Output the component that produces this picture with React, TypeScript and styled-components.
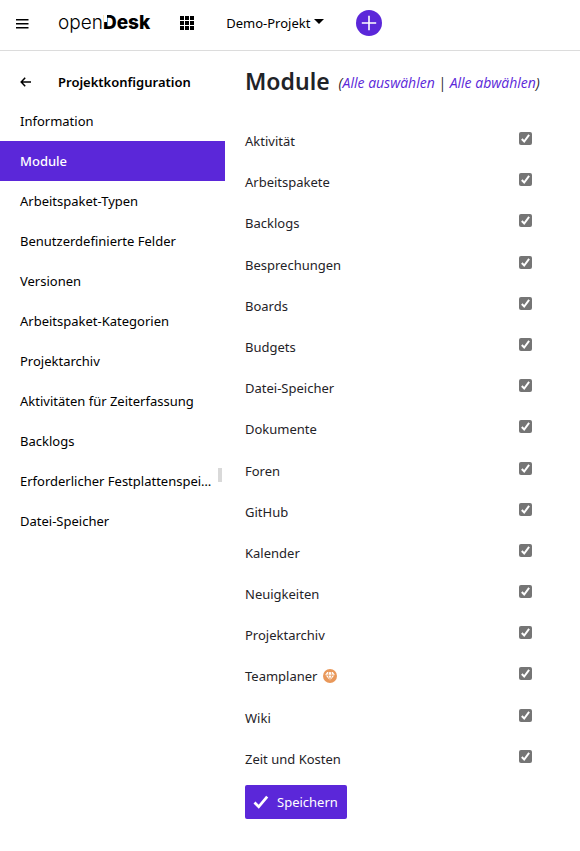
import React, { useState } from 'react';
import styled, { createGlobalStyle } from 'styled-components';

const accent = '#5b27d9';

const GlobalStyle = createGlobalStyle`
  *, *::before, *::after { box-sizing: border-box; }
  body {
    margin: 0;
    background: #fff;
    color: #1f2328;
    font-family: 'Noto Sans', sans-serif;
    font-size: 13px;
    line-height: 20px;
  }
  button { font: inherit; color: inherit; border: 0; padding: 0; background: none; cursor: pointer; }
  svg { display: block; flex: none; }
`;

const TopBar = styled.header`
  display: flex;
  align-items: center;
  height: 51px;
  padding: 0 16px 4px;
  border-bottom: 1px solid #dcdcdc;
  color: #000;
`;

const IconButton = styled.button`
  display: flex;
`;

const Logo = styled.a`
  position: relative;
  margin: 0 30px 0 29px;
  color: #000;
  font-family: Inter, sans-serif;
  font-size: 19px;
  font-weight: 300;
  line-height: 24px;
  text-decoration: none;

  b { font-weight: 800; }
`;

const LogoCut = styled.span`
  position: absolute;
  left: 46px;
  top: 4px;
  width: 3px;
  height: 7px;
  background: #fff;
`;

const ProjectButton = styled.button`
  display: flex;
  align-items: center;
  gap: 4px;
  margin-left: 32px;
`;

const Caret = styled.svg`
  margin-bottom: 4px;
`;

const AddButton = styled.button`
  display: grid;
  place-items: center;
  width: 26px;
  height: 26px;
  margin-left: 32px;
  border-radius: 50%;
  background: ${accent};
  color: #fff;
`;

const Body = styled.div`
  display: grid;
  grid-template-columns: 225px 1fr;
`;

const Sidebar = styled.aside`
  position: relative;
  padding-top: 12px;
  color: #000;
`;

const SidebarHead = styled.div`
  display: flex;
  align-items: center;
  gap: 26px;
  height: 38px;
  padding-left: 20px;
`;

const SidebarTitle = styled.h2`
  margin: 0;
  font-size: 13px;
  font-weight: 600;
`;

const MenuLink = styled.a<{ $active: boolean }>`
  display: block;
  padding: 0 12px 0 20px;
  overflow: hidden;
  color: ${(p) => (p.$active ? '#fff' : '#000')};
  background: ${(p) => (p.$active ? accent : 'transparent')};
  font-weight: ${(p) => (p.$active ? 500 : 400)};
  line-height: 40px;
  text-decoration: none;
  text-overflow: ellipsis;
  white-space: nowrap;
`;

const ResizeHandle = styled.span`
  position: absolute;
  right: 3px;
  top: 417px;
  width: 4px;
  height: 14px;
  background: #d9d9d9;
`;

const Main = styled.main`
  padding: 12px 20px 32px;
`;

const TitleRow = styled.div`
  display: flex;
  align-items: center;
  gap: 9px;
  white-space: nowrap;
`;

const Title = styled.h1`
  margin: 0;
  font-size: 23px;
  font-weight: 600;
  line-height: 36px;
`;

const Selection = styled.span`
  padding-top: 4px;
  font-family: 'Open Sans', sans-serif;
  font-size: 14px;
  font-style: italic;

  button { color: ${accent}; }
`;

const ModuleList = styled.div`
  display: grid;
  grid-auto-rows: 1fr;
  min-height: 659px;
  margin-top: 22px;
`;

const ModuleRow = styled.label`
  display: grid;
  grid-template-columns: 274px auto;
  justify-content: start;
  align-items: start;
  padding-top: 10px;
`;

const ModuleName = styled.span`
  display: flex;
  align-items: center;
  gap: 6px;
`;

const Check = styled.input`
  width: 13px;
  height: 13px;
  margin: 1px 0 0;
  appearance: none;
  border-radius: 2px;
  background: #757575;

  &:checked {
    background: #757575 url("data:image/svg+xml,%3Csvg xmlns='http://www.w3.org/2000/svg' viewBox='0 0 13 13'%3E%3Cpath d='M2.8 7l2.4 2.5 4.9-6.6' fill='none' stroke='white' stroke-width='2'/%3E%3C/svg%3E");
  }
`;

const SaveButton = styled.button`
  display: flex;
  align-items: center;
  gap: 8px;
  height: 34px;
  margin-top: 5px;
  padding: 0 9px 0 8px;
  border-radius: 2px;
  background: ${accent};
  color: #fff;
`;

const menu = [
  'Information', 'Module', 'Arbeitspaket-Typen', 'Benutzerdefinierte Felder', 'Versionen',
  'Arbeitspaket-Kategorien', 'Projektarchiv', 'Aktivitäten für Zeiterfassung', 'Backlogs',
  'Erforderlicher Festplattenspeicher', 'Datei-Speicher',
];

const modules = [
  'Aktivität', 'Arbeitspakete', 'Backlogs', 'Besprechungen', 'Boards', 'Budgets',
  'Datei-Speicher', 'Dokumente', 'Foren', 'GitHub', 'Kalender', 'Neuigkeiten',
  'Projektarchiv', 'Teamplaner', 'Wiki', 'Zeit und Kosten',
];

const dots = [0, 5, 10];

export default function App() {
  const [enabled, setEnabled] = useState<string[]>(modules);
  const toggle = (name: string) =>
    setEnabled((list) => (list.includes(name) ? list.filter((n) => n !== name) : [...list, name]));

  return (
    <>
      <GlobalStyle />
      <TopBar>
        <IconButton aria-label="Menü">
          <svg width="13" height="12" viewBox="0 0 13 12" fill="currentColor">
            <path d="M0 2h12.5v1.6H0zM0 6h12.5v1.6H0zM0 10h12.5v1.6H0z" />
          </svg>
        </IconButton>
        <Logo href="#">open<b>Desk</b><LogoCut /></Logo>
        <IconButton aria-label="Anwendungen">
          <svg width="14" height="14" viewBox="0 0 14 14" fill="currentColor">
            {dots.map((y) => dots.map((x) => <rect key={`${x}-${y}`} x={x} y={y} width="4" height="4" />))}
          </svg>
        </IconButton>
        <ProjectButton>
          Demo-Projekt
          <Caret width="10" height="5" viewBox="0 0 10 5" fill="currentColor"><path d="M0 0h10L5 5z" /></Caret>
        </ProjectButton>
        <AddButton aria-label="Neu">
          <svg width="16" height="16" viewBox="0 0 16 16" stroke="currentColor" strokeWidth="1.6">
            <path d="M8 .8v14.4M.8 8h14.4" />
          </svg>
        </AddButton>
      </TopBar>
      <Body>
        <Sidebar>
          <SidebarHead>
            <IconButton aria-label="Zurück">
              <svg width="12" height="10" viewBox="0 0 12 10" fill="none" stroke="currentColor" strokeWidth="1.5">
                <path d="M5.2.8L1.2 5l4 4.2M1.2 5H11" />
              </svg>
            </IconButton>
            <SidebarTitle>Projektkonfiguration</SidebarTitle>
          </SidebarHead>
          <nav>
            {menu.map((item) => (
              <MenuLink key={item} href="#" $active={item === 'Module'}>{item}</MenuLink>
            ))}
          </nav>
          <ResizeHandle />
        </Sidebar>
        <Main>
          <TitleRow>
            <Title>Module</Title>
            <Selection>
              (<button onClick={() => setEnabled(modules)}>Alle auswählen</button>
              {' | '}
              <button onClick={() => setEnabled([])}>Alle abwählen</button>)
            </Selection>
          </TitleRow>
          <ModuleList>
            {modules.map((name) => (
              <ModuleRow key={name}>
                <ModuleName>
                  {name}
                  {name === 'Teamplaner' && (
                    <svg width="14" height="14" viewBox="0 0 14 14">
                      <circle cx="7" cy="7" r="7" fill="#e9985a" />
                      <path d="M4.2 3h5.6l2 2.8L7 11.6 2.2 5.8z" fill="#fff" />
                      <path d="M2.2 6.2h9.6M5 6l2 5.4L9 6M5 6l.8-3M9 6l-.8-3" fill="none" stroke="#e9985a" strokeWidth=".8" />
                    </svg>
                  )}
                </ModuleName>
                <Check type="checkbox" checked={enabled.includes(name)} onChange={() => toggle(name)} />
              </ModuleRow>
            ))}
          </ModuleList>
          <SaveButton>
            <svg width="16" height="14" viewBox="0 0 16 14" fill="none" stroke="currentColor" strokeWidth="2.8">
              <path d="M1.5 7.6l4.2 4.2L14.2 1.6" />
            </svg>
            Speichern
          </SaveButton>
        </Main>
      </Body>
    </>
  );
}
